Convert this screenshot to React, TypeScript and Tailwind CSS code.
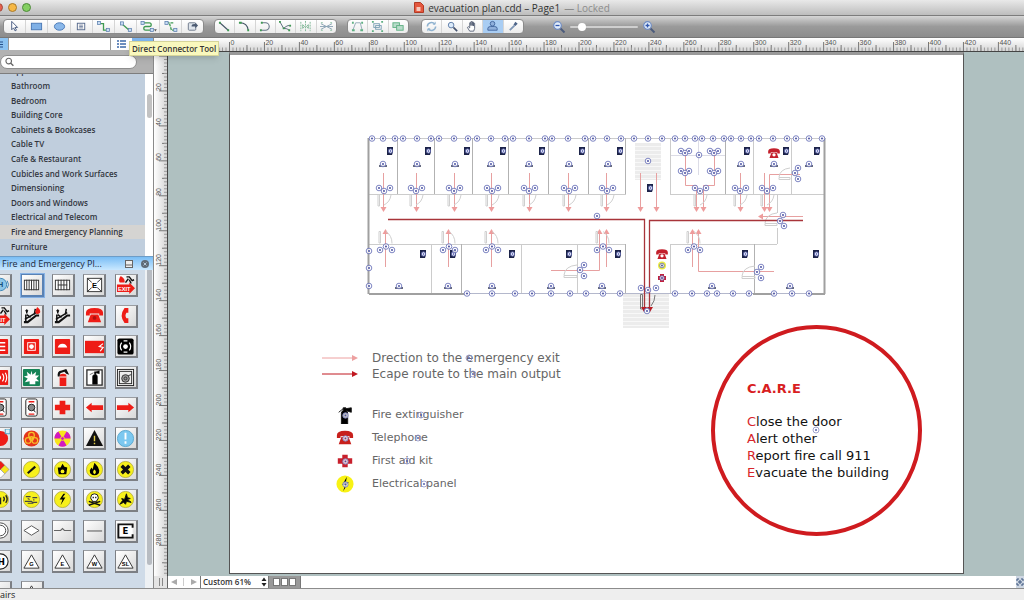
import { ReactNode } from "react";

const UI = "font-['Open_Sans','Noto_Sans',sans-serif]";
const DOC = "font-['DejaVu_Sans',sans-serif]";

/* ---------- Toolbar ---------- */

type Tool = { label: string; icon: ReactNode; active?: boolean };

const BLUE = "#5b7fae";
const GREEN = "#3f9a52";

const Node = ({ x, y }: { x: number; y: number }) => (
  <rect x={x} y={y} width="3.4" height="3.4" fill="#c9dcf3" stroke={BLUE} strokeWidth="0.8" />
);

const drawTools: Tool[] = [
  { label: "Select", icon: <path d="M5 1.5v9l2-2 1.6 3.2 1.5-.8L8.500 8h2.800z" fill="#fff" stroke="#44587e" /> },
  { label: "Rectangle", icon: <rect x="2.500" y="3.500" width="11" height="7" fill="#7fb0e6" stroke="#4a78b5" /> },
  { label: "Ellipse", icon: <ellipse cx="8" cy="7" rx="5.500" ry="4" fill="#8ab8ea" stroke="#4a78b5" /> },
  {
    label: "Text",
    icon: <g fill="none" stroke="#56698c"><rect x="3.500" y="3.500" width="8" height="7" /><path d="M5.500 5.500h4M5.500 7h4M5.500 8.500h4" strokeWidth=".8" /></g>,
  },
  { label: "Smart Connector", icon: <g><path d="M4 4h4v7h3" fill="none" stroke={GREEN} strokeWidth="1.400" /><Node x={1.5} y={1.500} /><Node x={11} y={9} /></g> },
  { label: "Direct Connector", icon: <g><path d="M4 4l8 7" fill="none" stroke={GREEN} strokeWidth="1.400" /><Node x={2.5} y={2} /><Node x={11} y={9} /></g> },
  {
    label: "Round Connector",
    icon: <g><path d="M4 3h6q2 0 2 2t-2 2H6q-2 0-2 2t2 2h5" fill="none" stroke={GREEN} strokeWidth="1.400" /><Node x={1} y={1.500} /><Node x={11} y={9} /><path d="M15 10h3l-1.500 2.500z" fill="#555" /></g>,
  },
  { label: "Bezier Connector", icon: <g><path d="M4 3h7M7 4l2 7h3" fill="none" stroke={GREEN} strokeWidth="1.400" strokeDasharray="3 1" /><Node x={2} y={1.500} /><Node x={11.5} y={9} /></g> },
  { label: "Insert", icon: <g><rect x="3.500" y="3" width="8" height="8" rx="1" fill="#dfe5ec" stroke="#6c7788" /><path d="M7 7q0-3 4-2.500V3l3 3-3 3V7z" fill="#4c5b72" /></g> },
];

const lineTools: Tool[] = [
  { label: "Line", icon: <g><path d="M3 3l9 8" stroke="#456" strokeWidth="1.200" /><path d="M2 2h2v2H2zM11 10h2v2h-2z" fill={GREEN} /></g> },
  { label: "Arc", icon: <g><path d="M3 3q8 0 9 8" fill="none" stroke="#456" strokeWidth="1.200" /><path d="M2 2h3v2H2zM11 10h2v2h-2z" fill={GREEN} /></g> },
  { label: "Curve", icon: <g><path d="M4 3h4a4 4 0 010 8H3" fill="none" stroke="#678" strokeWidth="1.200" /><path d="M3 2h2v2H3zM2 10h2v2H2z" fill={GREEN} /></g> },
  { label: "Spline", icon: <g><path d="M2 2l4 7q6-5 7-2M6 9q4 0 6 2" fill="none" stroke="#567" /><path d="M1 1h2v2H1zM5 8h2v2H5zM12 5h2v2h-2zM11 10h2v2h-2z" fill={GREEN} /></g> },
  { label: "Mirror", icon: <g fill="none" stroke="#7db795"><path d="M3 2v10M13 2v10M8 1v12" strokeDasharray="2 1" /><path d="M5 5l2 2-2 2zM11 5L9 7l2 2z" /></g> },
  { label: "Split", icon: <g fill="none" stroke="#8aa3b4"><path d="M2 4l12 6M2 10l12-6M1 7h14" /><path d="M2 3h2M12 3h2M2 11h2M12 11h2" stroke="#7db795" /></g> },
];

const groupTools: Tool[] = [
  { label: "Edit points", icon: <g fill="none" stroke="#92a9b7"><path d="M3 11L6 3h5l2 8" /><path d="M2 3h2M12 3h2M2 11h3M11 11h3" stroke="#5fb083" strokeWidth="2" /></g> },
  { label: "Group", icon: <g fill="none" stroke="#7ba0b5"><rect x="4" y="4" width="6" height="4" /><rect x="6" y="6" width="6" height="4" /><path d="M2 2h2M12 2h2M2 12h2M12 12h2" stroke="#5fb083" strokeWidth="2" /></g> },
  { label: "Ungroup", icon: <g fill="#b9dccb" stroke="#5fb083"><rect x="2" y="3" width="7" height="5" /><rect x="6" y="6" width="7" height="5" /></g> },
];

const viewTools: Tool[] = [
  { label: "Refresh", icon: <g fill="none" stroke="#8fb2cf" strokeWidth="1.600"><path d="M3.500 7a4.500 4.500 0 018-2.500M12.500 7a4.500 4.500 0 01-8 2.500" /><path d="M9.500 4.500h2.500V2M6.500 9.500H4V12" strokeWidth="1" /></g> },
  { label: "Zoom", icon: <g><circle cx="6.500" cy="5.500" r="3" fill="#dcebfa" stroke="#5d7aa6" /><path d="M9 8l4 4" stroke="#44526e" strokeWidth="1.800" /></g> },
  { label: "Pan", icon: <path d="M5 12L2.500 8l1-.8L5 8.500V3h1.300v3V1.800h1.400V6 2.300H9V6.500 3.500h1.300V9L9.300 12z" fill="#fff" stroke="#4b566c" strokeWidth=".9" /> },
  { label: "Stamp", active: true, icon: <g fill="#8fb0dc" stroke="#3b5f98" strokeWidth=".9"><circle cx="8" cy="4" r="2.500" /><path d="M3 9q0-2 3-2h4q3 0 3 2v2H3z" /></g> },
  { label: "Eyedropper", icon: <g><path d="M4 11l5-5" stroke="#7e96b5" strokeWidth="2" /><path d="M8 5l2-3 2.500 2L10 6.500z" fill="#4d6488" /></g> },
];

const ToolGroup = ({ tools, className }: { tools: Tool[]; className: string }) => (
  <div className={`flex h-[15px] overflow-hidden rounded border border-[#8b8b8b] bg-gradient-to-b from-white to-[#ececec] ${className}`}>
    {tools.map((t) => (
      <button
        key={t.label}
        aria-label={t.label}
        className={`flex flex-1 items-center justify-center border-r border-[#d5d5d5] last:border-r-0 ${t.active ? "bg-[#a9cdf3]" : ""}`}
      >
        <svg viewBox="0 0 16 14" className="h-[13px] w-[15px] overflow-visible">{t.icon}</svg>
      </button>
    ))}
  </div>
);

const ZoomGlyph = ({ plus }: { plus?: boolean }) => (
  <svg viewBox="0 0 14 14" className="size-3.5">
    <path d="M8 8l4.500 4.500" stroke="#4c5c7c" strokeWidth="2" />
    <circle cx="5.500" cy="5.500" r="3.800" fill="#e3eefb" stroke="#6f8cc4" strokeWidth="1.200" />
    <path d={plus ? "M3.500 5.500h4M5.500 3.500v4" : "M3.500 5.500h4"} stroke="#3158b0" strokeWidth="1.300" />
  </svg>
);

/* ---------- Rulers ---------- */

const STEP = 34.95;
const marks = Array.from({ length: 60 }, (_, i) => i - 2);

const HorizontalRuler = () => (
  <svg className="block h-3.5 w-full bg-gradient-to-b from-white to-[#d2d2d2]">
    {marks.map((k) => {
      const x = 75.5 + k * STEP;
      return (
        <g key={k} stroke="#777" strokeWidth="1">
          <path d={`M${x} 4V13M${x + STEP / 2} 7V13`} />
          <path d={Array.from({ length: 9 }, (_, j) => `M${x + ((j + 1) * STEP) / 10} 9.500V13`).join("")} stroke="#9a9a9a" />
          {k >= 0 && k <= 22 && (
            <text x={x + 1} y="7" stroke="none" fill="#555" className="font-['Liberation_Sans',sans-serif] text-[7px]">{k * 20}</text>
          )}
        </g>
      );
    })}
    <rect y="13" width="100%" height="1" fill="#444" />
  </svg>
);

const VerticalRuler = () => (
  <svg className="block h-full w-3.5 shrink-0 bg-gradient-to-r from-white to-[#d2d2d2]">
    {marks.slice(2, 30).map((k) => {
      const y = 4 + k * STEP;
      return (
        <g key={k} stroke="#777" strokeWidth="1">
          <path d={`M5 ${y}H13M8 ${y + STEP / 2}H13`} />
          <path d={Array.from({ length: 9 }, (_, j) => `M10 ${y + ((j + 1) * STEP) / 10}H13`).join("")} stroke="#9a9a9a" />
          {k > 0 && k <= 14 && (
            <text transform={`translate(6.500 ${y}) rotate(-90)`} stroke="none" fill="#555" className="font-['Liberation_Sans',sans-serif] text-[7px]">{k * 20}</text>
          )}
        </g>
      );
    })}
    <rect x="13" width="1" height="100%" fill="#444" />
  </svg>
);

/* ---------- Library ---------- */

const categories = [
  "Appliances", "Bathroom", "Bedroom", "Building Core", "Cabinets & Bookcases", "Cable TV", "Cafe & Restaurant",
  "Cubicles and Work Surfaces", "Dimensioning", "Doors and Windows", "Electrical and Telecom",
  "Fire and Emergency Planning", "Furniture",
];

const RED = "#ee1c16";
const PHONE = "M1 7Q1 2 10 2t9 5v3h-4V8H5v2H1zM6 9h8l3 8H3z";
const FLAME = "M10 3q4 4 5 8 0 5-5 5t-5-5q1-2 2-3l1 2q1-4 2-7z";

const Yellow = ({ children }: { children?: ReactNode }) => (
  <g><circle cx="10" cy="10" r="8.500" fill="#f7f01c" stroke="#aca53c" strokeWidth=".8" />{children}</g>
);
const RedBox = ({ children }: { children?: ReactNode }) => (
  <g><rect x="2" y="2" width="16" height="16" rx="1" fill={RED} />{children}</g>
);
const Tri = ({ t }: { t: string }) => (
  <g>
    <path d="M10 3l8 14H2z" fill="#fff" stroke="#333" />
    <text x="10" y="15" textAnchor="middle" className="font-['Liberation_Sans',sans-serif] text-[6px] font-bold">{t}</text>
  </g>
);
const Escalator = () => (
  <g fill="none" stroke="#111">
    <path d="M2 17h4l9-7h3" strokeWidth="2.200" />
    <path d="M5 5v3M4 9v7M5 9l4 3M14 3l-1 6M3 14l12-7" strokeWidth="1.600" />
    <circle cx="5" cy="5" r="1" fill="#111" />
  </g>
);
const Reel = () => (
  <g fill="none" stroke="#333"><circle cx="10" cy="11" r="4" fill="#999" /><circle cx="10" cy="11" r="1.500" /><path d="M13 8l3-1" /></g>
);
const Panel = () => (
  <g><rect x="4" y="1" width="12" height="18" rx="2" fill="#fff" stroke="#222" /><path d="M7 4h6M7 17h6" stroke={RED} strokeWidth="1.500" /><circle cx="10" cy="10" r="3.500" fill="#888" stroke="#222" /><path d="M12 12l2 3" stroke="#222" /></g>
);
const ExitSign = () => (
  <g>
    <path d="M1 10h13V8l6 6-6 6v-2H1z" fill={RED} />
    <path d="M5 1q5 3 4 7H4Q2 5 5 1z" fill={RED} />
    <path d="M11 2h3l3 4 2-1M13 4l-3 4M14 5l2 4" fill="none" stroke="#111" strokeWidth="1.500" />
    <text x="2" y="16.500" fill="#fff" className="font-['Liberation_Sans',sans-serif] text-[6px] font-bold">EXIT</text>
  </g>
);

const symbols: [string, ReactNode][] = [
  ["Hydrant", <g fill="#8cc6e8" stroke="#3b84b4"><circle cx="10" cy="10" r="6.500" /><text x="10" y="13" textAnchor="middle" fill="#15507c" stroke="none" className="font-['Liberation_Sans',sans-serif] text-[8px] font-bold">H</text><path d="M17 6q3 4 0 8" fill="none" /></g>],
  ["Stairs", <g stroke="#333"><rect x="2.500" y="5.500" width="15" height="10" fill="#fff" /><path d="M5 5v11M7.500 5v11M10 5v11M12.500 5v11M15 5v11" /></g>],
  ["Landing", <g stroke="#333"><rect x="2.500" y="5.500" width="15" height="10" fill="#fff" /><path d="M5.500 5v11M8.500 5v11M11.500 5v11M14.500 5v11M5 10.500h10" /></g>],
  ["Elevator", <g stroke="#333"><rect x="2.500" y="3.500" width="15" height="14" fill="#fff" /><path d="M3 4l14 13M17 4L3 17" /><rect x="7" y="7" width="6" height="7" fill="#fff" stroke="none" /><text x="10" y="13.500" textAnchor="middle" stroke="none" className="font-['Liberation_Sans',sans-serif] text-[8px] font-bold">E</text></g>],
  ["Exit", <ExitSign />],
  ["Exit route", <ExitSign />],
  ["Stairs in fire", <g><Escalator /><path d="M16 1q4 3 3 6-3 3-5 0 0-3 2-6z" fill={RED} /></g>],
  ["Escape stairs", <Escalator />],
  ["Telephone", <g><path d={PHONE} fill={RED} /><circle cx="10" cy="12.500" r="2" fill="#b01010" /></g>],
  ["Handset", <path d="M9 2h4v5h-2q-2 3 0 6h2v5H9q-6-8 0-16z" fill={RED} />],
  ["Call point", <RedBox><path d="M5 6h10M5 10h10M5 14h10M6 6v8" stroke="#fff" strokeWidth="1.500" /></RedBox>],
  ["Alarm button", <RedBox><rect x="6" y="6" width="8" height="8" fill="none" stroke="#fff" /><circle cx="10" cy="10" r="2.500" fill="#fff" /></RedBox>],
  ["Bell", <RedBox><path d="M5 11q1-4 5-4t5 4z" fill="#fff" /></RedBox>],
  ["Blanket", <g><path d="M0 4h20v13H0z" fill={RED} /><path d="M19 7l-4 3 4 1-3 4" fill="none" stroke="#fff" strokeWidth="1.200" /></g>],
  ["Sounder", <g><rect x="1.500" y="1.500" width="17" height="17" rx="2" /><circle cx="10" cy="10" r="2.500" fill="#fff" /><path d="M6 6q-3 4 0 8M14 6q3 4 0 8M8 4h4M8 16h4" fill="none" stroke="#fff" strokeWidth="1.300" /></g>],
  ["Fire alarm", <RedBox><path d="M9 8q2 2 0 4M12 6q3 4 0 8M15 5q3 5 0 10" fill="none" stroke="#fff" strokeWidth="1.200" /></RedBox>],
  ["Break glass", <g><rect x="1" y="1" width="18" height="18" rx="1" fill="#168457" /><path d="M10 3l1 4 4-3-1 4 4 0-3 3 3 3-4 0v3H8v-3l-5 1 3-4-4-2 4-1-1-4 4 3z" fill="#fff" /></g>],
  ["Extinguisher", <g><path d="M7 8q0-2 3.500-2T14 8v11H7z" fill={RED} /><path d="M5 9Q4 3 9 2.500L14 1l3 6-3-1-2-2-3 1Q7 5 7 9z" fill="#111" /><path d="M7 9.500h7" stroke="#fff" /></g>],
  ["Extinguisher cabinet", <g><rect x="2" y="2" width="16" height="16" fill="#fff" stroke="#222" strokeWidth="1.300" /><path d="M8 9q0-2 2-2V4h1.500l3.500-1v3l-3.500-1v2q1.500 0 1.500 2v8H8zM9 5L5 7" stroke="#111" strokeWidth=".6" /></g>],
  ["Hose reel", <g><rect x="1.500" y="1.500" width="17" height="17" fill="#fff" stroke="#222" /><rect x="3.500" y="3.500" width="13" height="13" fill="#eee" stroke="#222" /><Reel /></g>],
  ["Hydrant panel", <Panel />],
  ["Hose panel", <Panel />],
  ["First aid", <path d="M7 3h6v4h5v6h-5v4H7v-4H2V7h5z" fill={RED} />],
  ["Left", <path d="M1 10l6-5v2.500h12v5H7V15z" fill={RED} />],
  ["Right", <path d="M19 10l-6-5v2.500H1v5h12V15z" fill={RED} />],
  ["Red signal", <g><circle cx="10" cy="10" r="8" fill={RED} /><rect x="15" y="0" width="5" height="5" fill="#d8eef8" stroke="#4fa0c4" /></g>],
  ["Biohazard", <g><circle cx="10" cy="10" r="8.500" fill="#e5351a" /><g fill="none" stroke="#f6c02a" strokeWidth="1.300"><circle cx="10" cy="6.500" r="3" /><circle cx="6.500" cy="12" r="3" /><circle cx="13.500" cy="12" r="3" /><circle cx="10" cy="10" r="2" /></g></g>],
  ["Radiation", <g><circle cx="10" cy="10" r="8.500" fill="#f7e51c" /><path d="M10 10L5.700 2.700A8.500 8.500 0 001.500 10zM10 10h8.500a8.500 8.500 0 00-4.200-7.300zM10 10l-4.300 7.300a8.500 8.500 0 008.600 0z" fill="#d21ac0" /><circle cx="10" cy="10" r="2" fill="#d21ac0" stroke="#f7e51c" /></g>],
  ["Warning", <g><path d="M10 1l9 17H1z" fill="#111" /><path d="M10 7v6M10 14.500v1.500" stroke="#e5cf4a" strokeWidth="1.500" /></g>],
  ["Notice", <g><circle cx="10" cy="10" r="8.500" fill="#7cc8f0" stroke="#5ba6cc" /><path d="M10 4v7M10 13v2.500" stroke="#fff" strokeWidth="2" /></g>],
  ["Hazard diamond", <g stroke="#777" strokeWidth=".5"><path d="M10 1l4.500 4.500L10 10 5.500 5.500z" fill={RED} /><path d="M14.500 5.500L19 10l-4.500 4.500L10 10z" fill="#f7e51c" /><path d="M10 10l4.500 4.500L10 19l-4.500-4.500z" fill="#fff" /><path d="M5.500 5.500L10 10l-4.500 4.500L1 10z" fill={RED} /></g>],
  ["No tool", <Yellow><path d="M6 14l8-7" stroke="#111" strokeWidth="2.200" /></Yellow>],
  ["Oxidizer", <Yellow><path d="M10 4l2 3 3 1-1 7H6L5 8l3 0z" /><circle cx="10" cy="12" r="2" fill="#f7f01c" /></Yellow>],
  ["Flammable", <Yellow><path d={FLAME} /><path d="M10 10q3 3 0 5-3-2 0-5z" fill="#f7f01c" /></Yellow>],
  ["Irritant", <Yellow><path d="M6 6l8 8M14 6l-8 8" stroke="#111" strokeWidth="3.600" /></Yellow>],
  ["Radio", <Yellow><path d="M10 15V8M13 7q2 2 0 5M15.500 5.500q3 4 0 8M7 7q-2 2 0 5" fill="none" stroke="#222" strokeWidth="1.500" /></Yellow>],
  ["Corrosive", <Yellow><path d="M4 7h5M11 8h5M3 12h7l1 1h5M6 14h6M6 9l2 1M12 10l1 1" stroke="#444" strokeWidth="1.200" fill="none" /></Yellow>],
  ["High voltage", <Yellow><path d="M11 4L7 10h3l-2 6 5-8h-3l3-4z" /></Yellow>],
  ["Toxic", <Yellow><path d="M4 12l12 4M16 12L4 16" stroke="#111" strokeWidth="1.600" /><path d="M6 8a4 4 0 018 0q0 2-1.500 2.500V12h-5v-1.500Q6 10 6 8z" fill="#fff" stroke="#111" /><path d="M8 8h1.300M10.700 8H12" stroke="#111" strokeWidth="1.600" /></Yellow>],
  ["Explosive", <Yellow><path d="M11 4l1 4 3 1-3 1 4 3-5-1-1 3-2-2-4 2 3-4-1-2 3 1z" stroke="#111" /></Yellow>],
  ["Ring", <g fill="#fff" stroke="#444"><circle cx="10" cy="10" r="8" /><circle cx="10" cy="10" r="5.500" /></g>],
  ["Diamond", <path d="M2 10l8-5 8 5-8 5z" fill="#fff" stroke="#555" />],
  ["Break", <path d="M1 10h7l2-2 2 2h7" fill="none" stroke="#666" strokeWidth="1.200" />],
  ["Line", <path d="M2 10.500h16" stroke="#666" strokeWidth="1.200" />],
  ["Enclosure", <g><path d="M17.500 7V3.500h-15v14h15V14" fill="#fff" stroke="#111" strokeWidth="2" /><text x="10" y="13.500" textAnchor="middle" className="font-['DejaVu_Sans',sans-serif] text-[9px] font-bold">E</text></g>],
  ["Heat", <g><circle cx="10" cy="10" r="8" fill="#fff" stroke="#222" strokeWidth="1.200" /><text x="11" y="13.500" textAnchor="middle" className="font-['DejaVu_Sans',sans-serif] text-[9px] font-bold">H</text></g>],
  ["Gas", <Tri t="G" />],
  ["Electric", <Tri t="E" />],
  ["Water", <Tri t="W" />],
  ["Smoke", <Tri t="SL" />],
  ["Blank", null],
  ["Valve", <path d="M10 3l8 14H2z" fill="#fff" stroke="#333" />],
];

const Sidebar = () => (
  <aside className="flex w-[153px] shrink-0 flex-col overflow-hidden">
    <div className="flex h-3 bg-white">
      <button aria-label="Pages" className="flex w-2 items-center bg-[#8cc3f2]">
        <svg viewBox="0 0 8 12" className="h-3 w-2"><path d="M0 4h3M0 6.500h3M0 9h3" stroke="#26508a" strokeWidth="1.200" /></svg>
      </button>
      <div className="flex-1 border-x border-[#999]" />
      <button aria-label="List view" className="flex w-[21px] items-center justify-center">
        <svg viewBox="0 0 10 8" className="h-2 w-2.5"><path d="M0 1h2M0 4h2M0 7h2M3 1h6M3 4h6M3 7h6" stroke="#3d6aab" strokeWidth="1.300" /></svg>
      </button>
      <button aria-label="Search view" className="w-[21px] bg-[#7db4ee]" />
    </div>
    <div className="flex h-6 items-center border-b border-[#7d7d7d] bg-[#b2b2b2]">
      <label className="flex h-3.5 w-[137px] items-center rounded-full border border-[#8e8e8e] bg-white pl-1">
        <svg viewBox="0 0 10 10" className="size-2.5"><circle cx="4" cy="4" r="3" fill="none" stroke="#666" strokeWidth="1.200" /><path d="M6 6l3 3" stroke="#666" strokeWidth="1.500" /></svg>
        <input aria-label="Search libraries" className="w-full min-w-0 bg-transparent text-[8px] outline-none" />
      </label>
    </div>
    <div className="flex h-[182px] shrink-0 bg-white">
      <div className="flex flex-1 flex-col justify-end overflow-hidden bg-[#c0cedd] pb-0.5">
        <ul className="flex h-[190px] shrink-0 flex-col">
          {categories.map((c) => (
            <li key={c} className={`flex flex-1 ${c.startsWith("Fire") ? "bg-[#d5d4d2]" : ""}`}>
              <button className="flex w-full items-center pl-[11px] text-left text-[8px] leading-none font-semibold whitespace-nowrap text-[#32363e]">{c}</button>
            </li>
          ))}
        </ul>
      </div>
      <div className="w-2 pt-5 pl-0.5"><div className="h-6 w-[5px] rounded-full bg-[#c2c2c2]" /></div>
    </div>
    <header className="flex h-3.5 shrink-0 items-center gap-2 border-t border-[#6d9cc7] bg-gradient-to-b from-[#79bdf5] to-[#c9e8ff] pr-1 pl-0.5">
      <h2 className="flex-1 text-[9px] leading-none font-medium whitespace-nowrap text-[#1c2b3d]">Fire and Emergency Pl...</h2>
      <button aria-label="Save library">
        <svg viewBox="0 0 8 8" className="size-2"><rect x=".5" y=".5" width="7" height="7" fill="#eee" stroke="#666" /><path d="M1 5h6" stroke="#666" /></svg>
      </button>
      <button aria-label="Close library">
        <svg viewBox="0 0 8 8" className="size-2"><circle cx="4" cy="4" r="4" fill="#5f6b77" /><path d="M2.500 2.500l3 3M5.500 2.500l-3 3" stroke="#b4c8da" /></svg>
      </button>
    </header>
    <div className="flex min-h-0 flex-1 bg-white">
      <div className="flex-1 overflow-hidden bg-[#cfdbe8]">
        <div className="-ml-[15px] grid h-[338px] w-[157px] grid-cols-5 grid-rows-11">
          {symbols.map(([name, art], i) => (
            <button
              key={name}
              aria-label={name}
              className={`flex size-[23px] items-center justify-center place-self-center border-t border-r-2 border-b-2 border-l bg-gradient-to-br from-white to-[#d9d9d9] ${i === 1 ? "border-[#5a82b4] ring-1 ring-[#86b2e6]" : "border-[#7c7f84] border-t-[#9a9da2]"}`}
            >
              <svg viewBox="0 0 20 20" className="size-[19px]">{art}</svg>
            </button>
          ))}
        </div>
      </div>
      <div className="w-2 bg-[#eef1f4] pl-0.5"><div className="h-[295px] w-[5px] rounded-b-full bg-[#b8bcc2]" /></div>
    </div>
  </aside>
);

/* ---------- Floor plan ---------- */

const WALL = "#cccccc";
const PINK = "#e7a0a0";
const ROUTE = "#a8343a";

const topPins = [372, 383, 395, 403, 417, 431, 439, 454, 468, 477, 491, 505, 513, 529, 545, 552, 568, 585, 593, 607, 621, 634, 648, 662, 675, 685, 695, 702, 713, 724, 731, 741, 751, 759, 773, 787, 796, 809, 822];
const bottomPins = [467, 492, 515, 532, 551, 570, 586, 603, 620, 675, 692, 707, 717, 733, 749, 774, 792, 809];
const otherPins = [[648, 161], [369, 251], [369, 268], [369, 286], [584, 265], [580, 270], [584, 276], [761, 267], [757, 272], [761, 278], [798, 168], [795, 173], [798, 179], [783, 215], [780, 221], [784, 226], [597, 216], [641, 288], [648, 290], [656, 288], [699, 155]];
const detectors = [[383, 164], [417, 164], [455, 164], [491, 164], [529, 164], [569, 164], [608, 164], [741, 164], [774, 164], [809, 164], [399, 286], [448, 286], [492, 286], [551, 286], [602, 286], [712, 286], [790, 286]];
const extinguishers = [[390, 151], [428, 151], [467, 151], [503, 151], [542, 151], [582, 151], [620, 151], [747, 151], [786, 151], [817, 151], [650, 188], [423, 254], [453, 254], [512, 254], [569, 254], [618, 254], [745, 254], [816, 254]];
const upperDoors = [384, 416, 454, 492, 529, 569, 607, 700, 740, 767];
const lowerDoors = [386, 449, 492, 603, 694];
const downArrows = [383, 416, 454, 491, 529, 568, 606, 640, 656, 740, 764];
const upArrows = [385, 448, 491, 606, 692];

const Pin = ({ x, y, r = 2.8 }: { x: number; y: number; r?: number }) => (
  <g>
    <circle cx={x} cy={y} r={r} fill="#fff" fillOpacity=".8" stroke="#6068b4" strokeWidth=".8" />
    <circle cx={x} cy={y} r=".9" fill="#3a429c" />
  </g>
);
const DownHead = ({ x, y, color = "#ee9c9c" }: { x: number; y: number; color?: string }) => (
  <path d={`M${x - 3} ${y - 5}h6l-3 5z`} fill={color} />
);
const UpHead = ({ x, y }: { x: number; y: number }) => <path d={`M${x - 3} ${y + 5}h6l-3-5z`} fill="#ee9c9c" />;
const Phone = ({ x, y }: { x: number; y: number }) => (
  <g transform={`translate(${x - 6.5} ${y - 6}) scale(.65)`}><path d={PHONE} fill="#c3202c" /><circle cx="10" cy="12" r="2.500" fill="#fff" /></g>
);
const Steps = ({ x, y, w, h }: { x: number; y: number; w: number; h: number }) => (
  <g>
    <rect x={x} y={y} width={w} height={h} fill="#ececec" />
    {Array.from({ length: Math.floor(h / 4) }, (_, i) => (
      <path key={i} d={`M${x} ${y + 4 * i + 3.5}h${w}`} stroke="#f8f8f8" />
    ))}
  </g>
);

const FloorPlan = () => (
  <svg viewBox="360 130 475 205" className="absolute top-[75px] left-[130px] h-[205px] w-[475px]">
    <Steps x={635} y={143} w={26} h={37} />
    <Steps x={623} y={294} w={46} h={34} />
    <g fill="none" stroke={WALL}>
      <path d="M369 138.500H825M369 194.500H626M670 194.500H825M369 244.500H626M670 244.500H777M777.500 194V213M777.500 228V244" />
      <path d="M431.500 244V294M521.500 244V294M577.500 244V294M670.500 138V194M670.500 244V294M753.500 138V194M791.500 138V194" />
      <path d="M397.500 138V194M434.500 138V194M472.500 138V194M508.500 138V194M548.500 138V194M588.500 138V194M625.500 138V194M725.500 138V194M461.500 244V294M625.500 244V294M754.500 244V294" stroke="#b2b2b2" />
      <path d="M369 293.500H825" stroke="#b4b8cc" />
      <path d="M368.500 138V294M369 294H464M753 294H774M809 294H825M824.500 138V294" stroke="#a0a0a0" strokeWidth="2" />
      <path d="M671 155.500H725M698.500 139V175" stroke="#dcdce6" />
    </g>
    <g fill="none" stroke={PINK}>
      {downArrows.map((x) => <path key={x} d={`M${x + 0.5} 173V207`} />)}
      {upArrows.map((x) => <path key={x} d={`M${x + 0.5} 234V267`} />)}
      <path d="M800 174.500H769.500V207M599.500 234V270.500H551M698.500 234V271.500H774M803 216.500H763M685.500 150V185.500H696.500V207M714.500 150V185.500H703.500V207" />
    </g>
    {[...downArrows, 696, 703, 769].map((x) => <DownHead key={x} x={x + 0.5} y={212} />)}
    {[...upArrows, 599, 698].map((x) => <UpHead key={x} x={x + 0.5} y={229} />)}
    <path d="M758 216.500l5-3v6z" fill="#ee9c9c" />
    <g fill="none" stroke="#cfcfcf">
      {upperDoors.map((x) => <path key={x} d={`M${x - 6} 194.500h1.500v11.500h-1.500zM${x} 205q6-3 7-10`} />)}
      {lowerDoors.map((x) => <path key={x} d={`M${x - 7} 231.500h1.500V243h-1.500zM${x} 231.500q6 4 6 12`} />)}
      <path d="M577 265q-12 1-13 10M564 275.500h13v2h-13zM755 266q-12 1-13 10M742 276.500h13v2h-13zM790 168q-10 1-11 9M779 177.500h11v2h-11zM777 213q-11 1-12 10M765 223.500h12v2h-12z" />
      <path d="M640.500 294.500h2V309h-2zM651 306q4-5 4-11" stroke="#777" />
    </g>
    <path d="M388 219.500H644.500V308M803 220.500H649.500V308" fill="none" stroke={ROUTE} strokeWidth="1.300" />
    <DownHead x={644} y={312} color="#b81c24" />
    <DownHead x={650} y={312} color="#b81c24" />
    {extinguishers.map(([x, y]) => (
      <g key={`${x}-${y}`}>
        <path d={`M${x - 3} ${y - 4}h6v5l-1 3h-5z`} fill="#1c2348" />
        <circle cx={x + 0.5} cy={y} r="2.200" fill="#dfe3f6" stroke="#4a539c" strokeWidth=".8" />
        <circle cx={x + 0.5} cy={y} r=".7" fill="#3a429c" />
      </g>
    ))}
    {detectors.map(([x, y]) => (
      <g key={`${x}-${y}`}><path d={`M${x - 4} ${y + 2}h8`} stroke="#333a55" strokeWidth="1.500" /><Pin x={x} y={y} /></g>
    ))}
    {topPins.map((x) => <Pin key={x} x={x} y={138.5} />)}
    {bottomPins.map((x) => <Pin key={x} x={x} y={293.5} />)}
    {upperDoors.map((x) => <g key={x}><Pin x={x - 5} y={188} /><Pin x={x + 6} y={188} /><Pin x={x} y={191} /></g>)}
    {lowerDoors.map((x) => <g key={x}><Pin x={x - 6} y={250} /><Pin x={x + 6} y={250} /><Pin x={x} y={246.500} /></g>)}
    {[[685, 152], [714, 152], [685, 172], [714, 172]].map(([x, y]) => (
      <g key={`${x}-${y}`}><Pin x={x - 4} y={y - 1} /><Pin x={x + 4} y={y - 1} /><Pin x={x} y={y + 1} /></g>
    ))}
    {otherPins.map(([x, y]) => <Pin key={`${x}-${y}`} x={x} y={y} />)}
    <Phone x={774} y={153} />
    <Phone x={662} y={254} />
    <circle cx="662" cy="265.500" r="4" fill="#ecec40" />
    <Pin x={662} y={265.5} r={2.3} />
    <path d="M660 274h4v2h2v4h-2v2h-4v-2h-2v-4h2z" fill="#c3203c" />
    <Pin x={662} y={278} r={2.3} />
    <Pin x={647} y={311} />
  </svg>
);

/* Selection handle drawn over a text object */
const Handle = ({ className }: { className: string }) => (
  <svg viewBox="0 0 8 8" className={`absolute size-2 ${className}`}>
    <circle cx="4" cy="4" r="3" fill="none" stroke="#8a90c8" strokeWidth=".8" />
    <circle cx="4" cy="4" r="1" fill="#5a62ac" />
  </svg>
);

const arrows = [
  { text: "Drection to the emergency exit", color: "#eda0a0", handle: "left-[93px] top-1" },
  { text: "Ecape route to the main output", color: "#c01820", handle: "left-[97px] top-1" },
];

const legend = [
  { text: "Fire extinguisher", handle: "left-[45px] top-2", art: <path d="M6 8q0-2 2-3V2h3v1l6-1v5l-6-2q2 1 2 3v12H6zM8 3L3 7" stroke="#111" /> },
  { text: "Telephone", handle: "left-[42px] top-2", art: <path d={PHONE} fill="#c8201c" /> },
  { text: "First aid kit", handle: "left-[31px] top-2", art: <path d="M7 3h6v4h5v6h-5v4H7v-4H2V7h5z" fill="#c8202c" /> },
  { text: "Electrical panel", handle: "left-[48px] top-2", art: <g><circle cx="10" cy="10" r="9.500" fill="#f8f214" /><path d="M12 2L7 11h3L8 18l6-10h-3z" /></g> },
];

const Page = () => (
  <div className={`relative mr-[60px] mb-0.5 ml-[61px] flex-1 border border-t-3 border-[#555] border-t-[#999] bg-white ${DOC}`}>
    <FloorPlan />
    <div className="absolute top-[295px] left-[92px]">
      {arrows.map((a) => (
        <div key={a.text} className="flex h-4 items-center gap-[14px] text-[12px] leading-4 whitespace-nowrap text-[#666]">
          <svg viewBox="0 0 36 6" className="h-1.5 w-9"><path d="M0 3h32" stroke={a.color} /><path d="M30 0l6 3-6 3z" fill={a.color} /></svg>
          <span className="relative">{a.text}<Handle className={a.handle} /></span>
        </div>
      ))}
    </div>
    <div className="absolute top-[348px] left-[106px]">
      {legend.map((l) => (
        <div key={l.text} className="flex h-[23px] items-center gap-[18px] text-[11px] leading-[23px] whitespace-nowrap text-[#666]">
          <svg viewBox="0 0 20 20" className="size-[18px]">
            {l.art}
            <circle cx="10.500" cy="10.500" r="3" fill="#fff" fillOpacity=".75" stroke="#7a80c0" />
            <circle cx="10.500" cy="10.500" r="1" fill="#4a52a4" />
          </svg>
          <span className="relative">{l.text}<Handle className={l.handle} /></span>
        </div>
      ))}
    </div>
    <div className="absolute top-[270px] left-[481px] flex size-[211px] flex-col items-start justify-center rounded-full border-4 border-[#cf1b1f] pl-8 text-[13px] leading-[17px] whitespace-nowrap text-[#111]">
      <strong className="mb-4 text-[#d8201f]">C.A.R.E</strong>
      {["Close the door", "Alert other", "Report fire call 911", "Evacuate the building"].map((line) => (
        <p key={line}><span className="text-[#d8262b]">{line[0]}</span>{line.slice(1)}</p>
      ))}
      <Handle className="top-[97px] left-[97px]" />
    </div>
  </div>
);

/* ---------- Window ---------- */

export default function App() {
  return (
    <div className={`flex h-screen flex-col overflow-hidden bg-[#eeeeee] ${UI}`}>
      <header className="relative flex h-4 shrink-0 items-center justify-center border-b border-[#7c7c7c] bg-gradient-to-b from-[#e9e9e9] to-[#bdbdbd] text-[10px] leading-none text-[#333]">
        <div className="absolute top-[3px] -left-[6px] flex gap-[5px]">
          <button aria-label="Close" className="size-[9px] rounded-full border border-[#a34a3c] bg-[#e8604e]" />
          <button aria-label="Minimize" className="size-[9px] rounded-full border border-[#a87a2c] bg-[#f6b845]" />
          <button aria-label="Maximize" className="size-[9px] rounded-full border border-[#4f8a3c] bg-[#84cf62]" />
        </div>
        <svg viewBox="0 0 10 11" className="mr-1 h-[11px] w-2.5"><path d="M.5.500h6l3 3v7h-9z" fill="#e4573d" stroke="#b23a25" /><path d="M2.500 5h4v4h-4z" fill="#f7c9bd" /></svg>
        <h1 className="mr-1 font-medium">evacuation plan.cdd – Page1</h1>
        <span className="text-[#8c8c8c]">— Locked</span>
      </header>

      <div className="flex h-[22px] shrink-0 items-center border-b border-[#777] bg-gradient-to-b from-[#d6d6d6] via-[#9a9a9a] to-[#8c8c8c] pl-[3px]">
        <ToolGroup tools={drawTools} className="mr-2.5 w-[201px]" />
        <ToolGroup tools={lineTools} className="mr-2.5 w-[123px]" />
        <ToolGroup tools={groupTools} className="mr-3 w-[62px]" />
        <ToolGroup tools={viewTools} className="mr-7 w-[103px]" />
        <button aria-label="Zoom out"><ZoomGlyph /></button>
        <input
          type="range"
          aria-label="Zoom level"
          min={0}
          max={100}
          defaultValue={14}
          className="mx-1 h-2 w-[68px] appearance-none bg-transparent [&::-webkit-slider-runnable-track]:h-0.5 [&::-webkit-slider-runnable-track]:rounded [&::-webkit-slider-runnable-track]:bg-[#cfcfcf] [&::-webkit-slider-thumb]:-mt-[3px] [&::-webkit-slider-thumb]:size-2 [&::-webkit-slider-thumb]:appearance-none [&::-webkit-slider-thumb]:rounded-full [&::-webkit-slider-thumb]:bg-white"
        />
        <button aria-label="Zoom in"><ZoomGlyph plus /></button>
      </div>

      <div className="relative flex min-h-0 flex-1">
        <Sidebar />
        <main className="flex min-w-0 flex-1 flex-col border-l border-[#8a8a8a]">
          <HorizontalRuler />
          <div className="flex min-h-0 flex-1">
            <VerticalRuler />
            <div className="flex min-w-0 flex-1 bg-[#afc0c0]"><Page /></div>
          </div>
          <div className="flex h-3 shrink-0 items-stretch bg-white">
            <div className="flex w-3.5 items-center justify-center border-r border-[#666] bg-[#e4e4e4]">
              <svg viewBox="0 0 6 8" className="h-2 w-1.5"><path d="M1.500 0v8M4.500 0v8" stroke="#888" /></svg>
            </div>
            <div className="flex w-[33px] items-center justify-around border-r border-[#777]">
              <button aria-label="Previous page"><svg viewBox="0 0 6 6" className="size-1.5"><path d="M6 0v6L0 3z" fill="#aaa" /></svg></button>
              <span className="h-2 w-px bg-[#ccc]" />
              <button aria-label="Next page"><svg viewBox="0 0 6 6" className="size-1.5"><path d="M0 0v6l6-3z" fill="#aaa" /></svg></button>
            </div>
            <select aria-label="Zoom" className="w-[59px] appearance-none bg-transparent pl-0.5 text-[8px] leading-3 font-semibold text-[#333]">
              <option>Custom 61%</option>
            </select>
            <svg viewBox="0 0 8 12" className="h-3 w-2"><path d="M1.500 5L4 1.500 6.500 5zM1.500 7h5L4 10.500z" fill="#222" /></svg>
            <div className="flex w-[33px] items-center justify-center gap-px border-x border-[#777] bg-[#999]">
              <span className="h-2 w-[7px] border border-[#777] bg-white" />
              <span className="h-2 w-[7px] border border-[#777] bg-white" />
              <span className="h-2 w-[7px] border border-[#777] bg-white" />
            </div>
            <div className="flex-1" />
            <button aria-label="Navigator" className="flex w-2 items-center justify-center bg-[#cdd6e2]">
              <svg viewBox="0 0 8 8" className="size-2"><path d="M1 3V1h2M5 1h2v2M7 5v2H5M3 7H1V5M3 3h2v2H3z" fill="none" stroke="#3d567f" /></svg>
            </button>
          </div>
        </main>
        <div role="tooltip" className="absolute top-[3px] left-[129px] flex h-[15px] items-center border border-[#d6d59a] bg-[#f9f8bd] px-0.5 text-[8px] leading-none font-semibold whitespace-nowrap text-[#333] shadow-md">
          Direct Connector Tool
        </div>
      </div>

      <footer className="flex h-3 shrink-0 items-center border-t border-[#8c8c8c] bg-[#eeeeee] text-[9px] leading-none text-[#222]">airs</footer>
    </div>
  );
}
